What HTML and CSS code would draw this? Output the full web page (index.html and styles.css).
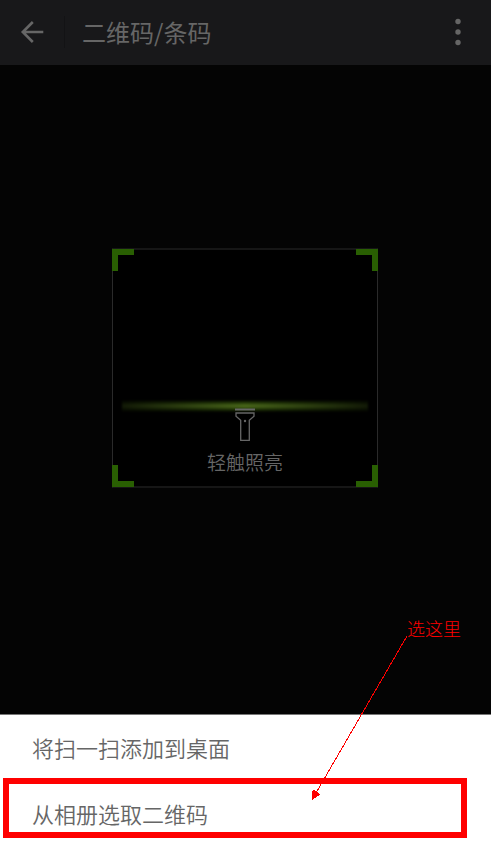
FILE: index.html
```html
<!DOCTYPE html>
<html lang="zh-CN">
<head>
<meta charset="utf-8">
<meta name="viewport" content="width=device-width, initial-scale=1">
<title>二维码/条码</title>
<link rel="stylesheet" href="styles.css">
</head>
<body>
<div class="app">
  <header class="bar">
    <button class="icon-button back" type="button" aria-label="返回">
      <svg width="24" height="24" viewBox="0 0 24 24"><path d="M12.8 2 L2.8 12 L12.8 22 M2.8 12 H23.3" fill="none" stroke="currentColor" stroke-width="2.6"/></svg>
    </button>
    <h1 class="title">二维码/条码</h1>
    <button class="icon-button more" type="button" aria-label="更多">
      <svg width="6" height="28" viewBox="0 0 6 28"><g fill="currentColor"><circle cx="3" cy="3.5" r="2.7"/><circle cx="3" cy="14" r="2.7"/><circle cx="3" cy="24.5" r="2.7"/></g></svg>
    </button>
  </header>

  <main class="scanner">
    <div class="frame">
      <span class="corner top-left"></span>
      <span class="corner top-right"></span>
      <span class="corner bottom-left"></span>
      <span class="corner bottom-right"></span>
      <div class="beam"></div>
      <button class="torch" type="button">
        <svg width="20" height="34" viewBox="0 0 20 34"><g fill="none" stroke="currentColor"><path d="M0 1.5 H20" stroke-width="2"/><path d="M1 5 H19 V8.2 L14.3 12.2 V32.4 H5.7 V12.2 L1 8.2 Z" stroke-width="1.3"/></g><circle cx="10" cy="13" r="1.2" fill="currentColor"/></svg>
        <span>轻触照亮</span>
      </button>
    </div>
  </main>

  <div class="sheet">
    <button class="option" type="button">将扫一扫添加到桌面</button>
    <button class="option" type="button">从相册选取二维码</button>
    <div class="highlight"></div>
    <div class="note">
      <span>选这里</span>
      <svg width="98" height="166" viewBox="0 0 98 166" shape-rendering="crispEdges"><path d="M96 1 L5 158" fill="none" stroke="#f00"/><path d="M1 165 V156 L3 155 L9 159 L7 161 Z" fill="#f00"/></svg>
    </div>
  </div>
</div>
</body>
</html>
```
FILE: styles.css
```css
* {
  box-sizing: border-box;
}

body {
  margin: 0;
  background: #040404;
  font-family: "Noto Sans CJK SC", sans-serif;
}

button {
  margin: 0;
  padding: 0;
  border: 0;
  background: none;
  color: inherit;
  font: inherit;
  cursor: pointer;
}

svg {
  display: block;
}

.app {
  display: flex;
  flex-direction: column;
  min-height: 100vh;
  overflow: hidden;
}

.bar {
  display: flex;
  align-items: center;
  height: 65px;
  padding-bottom: 1px;
  background: #18181a;
  color: #666;
}

.icon-button {
  display: flex;
  align-items: center;
  justify-content: center;
  height: 32px;
}

.back {
  width: 65px;
  border-right: 1px solid #131315;
}

.more {
  width: 66px;
}

.title {
  flex: 1;
  margin: 0;
  padding-left: 17px;
  font-size: 24px;
  font-weight: 400;
  line-height: 32px;
}

.scanner {
  flex: 1;
  padding: 183px 1px 0 0;
}

.frame {
  position: relative;
  display: flex;
  flex-direction: column;
  align-items: center;
  width: 266px;
  height: 240px;
  margin: 0 auto;
  padding-top: 150px;
  border: 1px solid #2a2a2a;
  border-top: 2px solid #161616;
  border-bottom: 2px solid #161616;
  background: #000;
}

.corner {
  position: absolute;
  width: 22px;
  height: 22px;
  border: 0 solid #295f02;
}

.top-left {
  top: -1px;
  left: -1px;
  border-width: 6px 0 0 6px;
}

.top-right {
  top: -1px;
  right: -1px;
  border-width: 6px 6px 0 0;
}

.bottom-left {
  bottom: -1px;
  left: -1px;
  border-width: 0 0 6px 6px;
}

.bottom-right {
  right: -1px;
  bottom: -1px;
  border-width: 0 6px 6px 0;
}

.beam {
  width: 246px;
  height: 12px;
  background:
    linear-gradient(90deg, rgb(0 0 0 / 75%), transparent 50%, rgb(0 0 0 / 75%)),
    linear-gradient(#000, #263f06 25%, #527020 50%, #263f06 75%, #000);
  filter: blur(1px);
}

.torch {
  display: flex;
  flex-direction: column;
  align-items: center;
  gap: 6px;
  margin-top: -4px;
  color: #666;
  font-size: 19px;
  font-weight: 350;
  line-height: 28px;
  z-index: 1;
}

.sheet {
  position: relative;
  display: flex;
  flex-direction: column;
  gap: 34px;
  padding: 16px 32px;
  border-top: 1px solid #777;
  background: #fff;
  color: #666;
}

.option {
  font-size: 22px;
  font-weight: 350;
  line-height: 32px;
  text-align: left;
}

.highlight {
  position: absolute;
  right: 24px;
  bottom: 7px;
  left: 3px;
  height: 60px;
  border: 6px solid #f00;
  pointer-events: none;
}

.note {
  position: absolute;
  right: 30px;
  bottom: 44px;
  width: 150px;
  color: #f00;
  font-size: 18px;
  font-weight: 300;
  line-height: 20px;
  text-align: right;
  pointer-events: none;
}

.note span {
  display: block;
  margin-bottom: -3px;
}
```
